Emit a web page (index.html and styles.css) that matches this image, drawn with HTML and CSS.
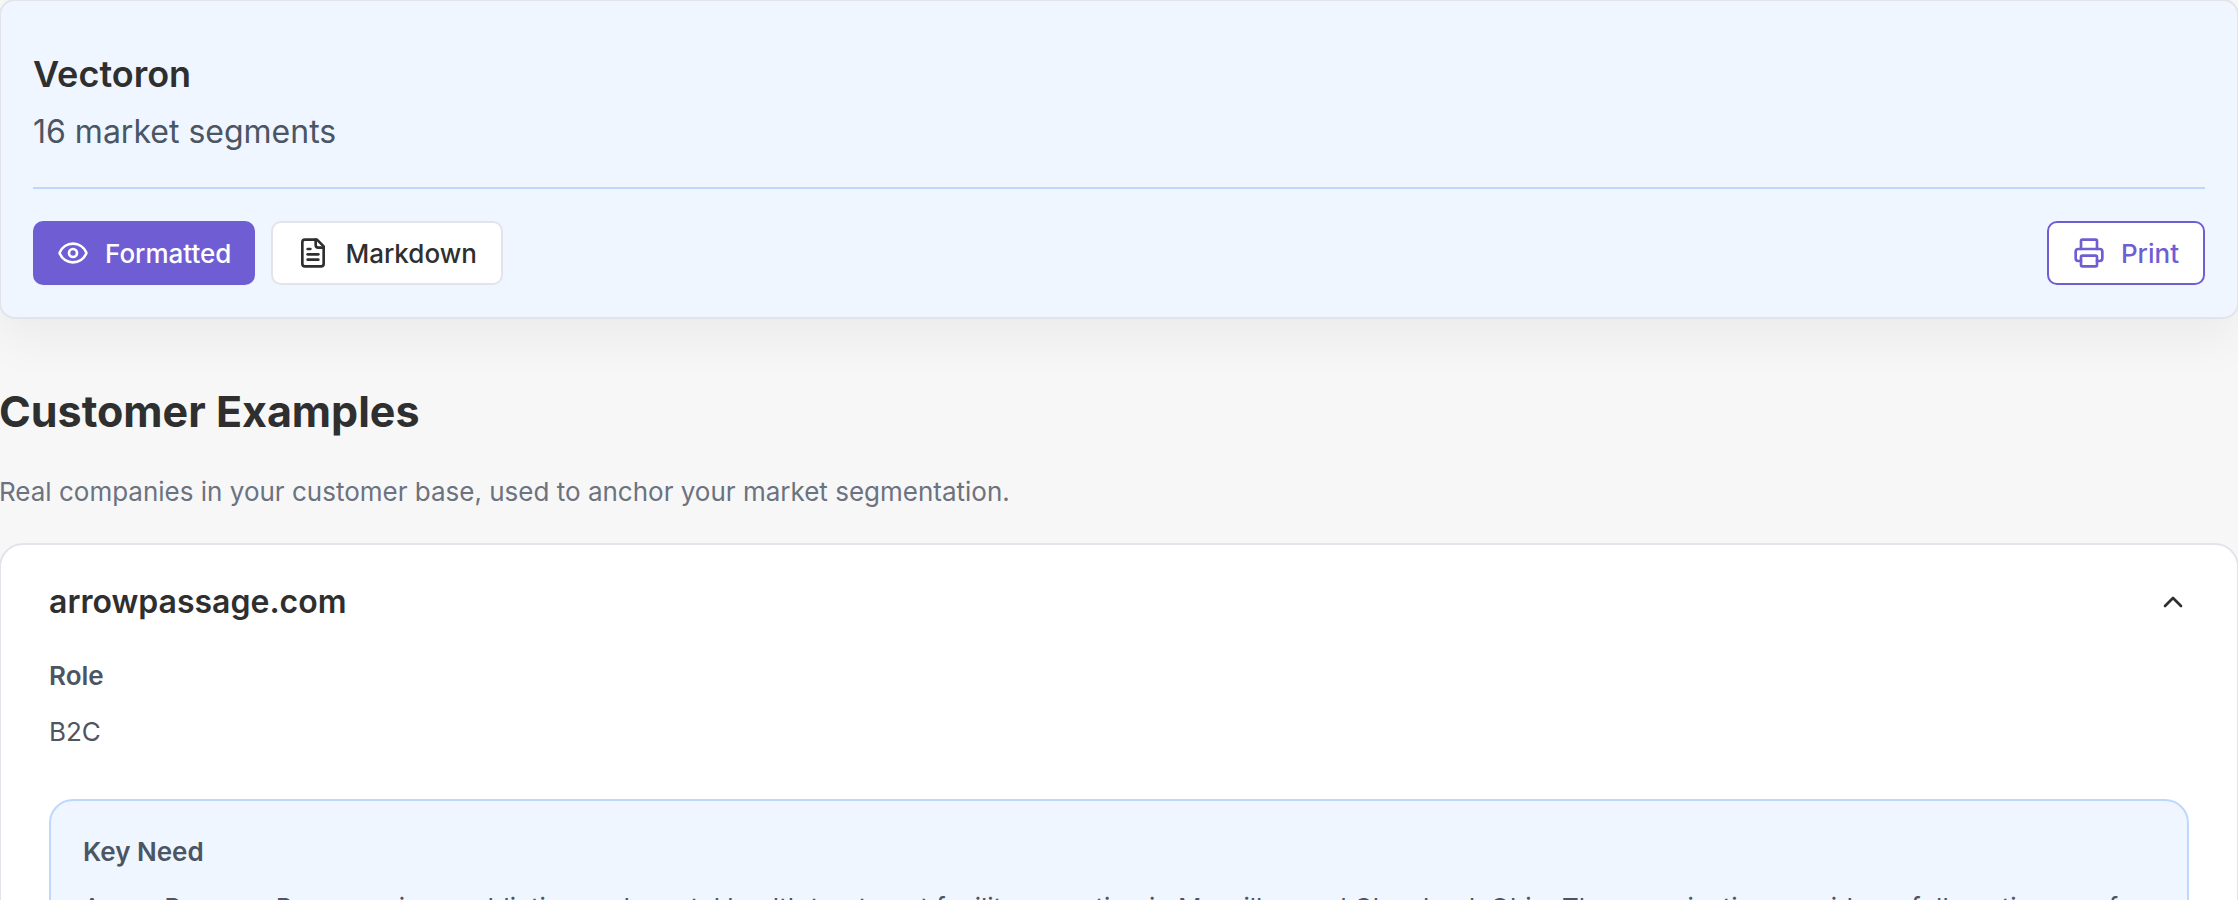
FILE: index.html
```
<!DOCTYPE html>
<html lang="en">
<head>
    <meta charset="UTF-8">
    <meta name="viewport" content="width=device-width, initial-scale=1.0">
    <title>Vectoron - Market Segments</title>
    <link rel="stylesheet" href="styles.css">
</head>
<body>

    <main class="page">

        <!-- Report header -->
        <header class="report-header">
            <h1>Vectoron</h1>
            <p class="segment-count">16 market segments</p>

            <div class="toolbar">
                <button type="button" class="btn btn-primary">
                    <svg class="icon" viewBox="0 0 24 24" aria-hidden="true">
                        <path d="M2.062 12.348a1 1 0 0 1 0-.696 10.75 10.75 0 0 1 19.876 0 1 1 0 0 1 0 .696 10.75 10.75 0 0 1-19.876 0"/>
                        <circle cx="12" cy="12" r="3"/>
                    </svg>
                    Formatted
                </button>
                <button type="button" class="btn btn-plain">
                    <svg class="icon" viewBox="0 0 24 24" aria-hidden="true">
                        <path d="M15 2H6a2 2 0 0 0-2 2v16a2 2 0 0 0 2 2h12a2 2 0 0 0 2-2V7Z"/>
                        <path d="M14 2v4a2 2 0 0 0 2 2h4"/>
                        <path d="M10 9H8"/>
                        <path d="M16 13H8"/>
                        <path d="M16 17H8"/>
                    </svg>
                    Markdown
                </button>
                <button type="button" class="btn btn-outline">
                    <svg class="icon" viewBox="0 0 24 24" aria-hidden="true">
                        <path d="M6 18H4a2 2 0 0 1-2-2v-5a2 2 0 0 1 2-2h16a2 2 0 0 1 2 2v5a2 2 0 0 1-2 2h-2"/>
                        <path d="M6 9V3a1 1 0 0 1 1-1h10a1 1 0 0 1 1 1v6"/>
                        <rect x="6" y="14" width="12" height="8" rx="1"/>
                    </svg>
                    Print
                </button>
            </div>
        </header>

        <!-- Customer examples -->
        <section>
            <h2>Customer Examples</h2>
            <p class="intro">Real companies in your customer base, used to anchor your market segmentation.</p>

            <article class="company">
                <div class="company-head">
                    <h3>arrowpassage.com</h3>
                    <button type="button" class="toggle" aria-label="Collapse" aria-expanded="true">
                        <svg class="icon" viewBox="0 0 24 24" aria-hidden="true">
                            <path d="m18 15-6-6-6 6"/>
                        </svg>
                    </button>
                </div>

                <div class="field">
                    <h4>Role</h4>
                    <p>B2C</p>
                </div>

                <div class="field key-need">
                    <h4>Key Need</h4>
                    <p>Arrow Passage Recovery is an addiction and mental health treatment facility operating in Massillon and Cleveland, Ohio. The organization provides a full continuum of care.</p>
                </div>
            </article>
        </section>

    </main>

</body>
</html>
```
FILE: styles.css
```
* {
    box-sizing: border-box;
}

body {
    margin: 0;
    background: #f7f7f7;
    color: #2f2f2f;
    font-family: Inter, sans-serif;
    font-size: 26px;
    line-height: 42px;
    overflow-x: hidden;
}

h1, h2, h3, h4, p {
    margin: 0;
}

/* outer card borders bleed over the window edge */
.page {
    margin: -1px;
}

/* Report header */
.report-header {
    padding: 48px 32px 32px;
    background: #eff6ff;
    border: 2px solid #e2e4e9;
    border-radius: 16px;
    box-shadow: 0 20px 50px rgba(0, 0, 0, 0.05);
}

h1 {
    font-size: 36px;
    line-height: 50px;
    font-weight: 600;
}

.segment-count {
    margin-top: 8px;
    font-size: 32px;
    line-height: 50px;
    color: #4b5563;
}

.toolbar {
    display: flex;
    gap: 16px;
    margin-top: 30px;
    padding-top: 32px;
    border-top: 2px solid #bed8fd;
}

.btn {
    display: flex;
    align-items: center;
    gap: 16px;
    height: 64px;
    padding: 0 24px;
    border: none;
    border-radius: 10px;
    font-family: inherit;
    font-size: 26px;
    font-weight: 500;
    cursor: pointer;
}

.btn-primary {
    background: #6f5ed3;
    color: white;
}

.btn-plain {
    background: white;
    color: #2f2f2f;
    border: 2px solid #e2e4e9;
}

.btn-outline {
    margin-left: auto;
    background: white;
    color: #6f5ed3;
    border: 2px solid #6f5ed3;
}

.icon {
    width: 32px;
    height: 32px;
    fill: none;
    stroke: currentColor;
    stroke-width: 2;
    stroke-linecap: round;
    stroke-linejoin: round;
}

/* Customer examples */
h2 {
    margin-top: 64px;
    font-size: 43px;
    line-height: 56px;
    font-weight: 700;
}

.intro {
    margin-top: 32px;
    color: #6b7280;
}

.company {
    margin-top: 30px;
    padding: 32px 48px 48px;
    background: white;
    border: 2px solid #e2e4e9;
    border-radius: 24px;
}

.company-head {
    display: flex;
    align-items: center;
    justify-content: space-between;
}

h3 {
    font-size: 32px;
    line-height: 50px;
    font-weight: 600;
}

.toggle {
    display: flex;
    padding: 0;
    border: none;
    background: none;
    color: #2f2f2f;
    cursor: pointer;
}

.field {
    margin-top: 28px;
    color: #4b5563;
}

.field h4 {
    font-size: 26px;
    font-weight: 600;
}

.field p {
    margin-top: 14px;
}

.key-need {
    margin-top: 46px;
    padding: 30px 32px;
    background: #eff6ff;
    border: 2px solid #bed8fd;
    border-radius: 24px;
}
```
